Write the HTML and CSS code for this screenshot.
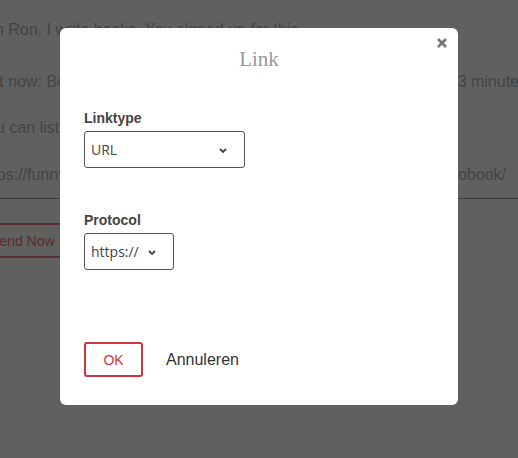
FILE: index.html
```html
<!DOCTYPE html>
<html lang="nl">
<head>
<meta charset="utf-8">
<title>Link</title>
<link rel="stylesheet" href="styles.css">
</head>
<body>
<main class="page">
  <p class="line line-1">I'm Ron. I write books. You signed up for this.</p>
  <p class="line line-2"><span class="line-start">Out now: Book one</span><span class="line-end">33 minutes</span></p>
  <p class="line line-3"><span class="line-start">You can listen to it</span></p>
  <p class="line line-4"><span class="line-start">https://funnybooks</span><span class="line-end">audiobook/</span></p>
  <hr class="rule">
  <button class="send-btn">Send Now</button>
</main>

<div class="overlay">
  <section class="dialog" role="dialog" aria-labelledby="dlg-title">
    <button class="close" aria-label="Sluiten">
      <svg width="10" height="10" viewBox="0 0 10 10"><path d="M1 1 L9 9 M9 1 L1 9" stroke="#777" stroke-width="2.6" stroke-linecap="butt" fill="none"/></svg>
    </button>
    <h2 id="dlg-title" class="title">Link</h2>

    <div class="field field-type">
      <label class="label">Linktype</label>
      <div class="select select-wide"><span>URL</span>
        <svg class="chev" width="8" height="5" viewBox="0 0 8 5"><path d="M1 1 L4 4 L7 1" stroke="#444" stroke-width="1.8" fill="none"/></svg>
      </div>
    </div>

    <div class="field field-protocol">
      <label class="label">Protocol</label>
      <div class="select select-narrow"><span>https://</span>
        <svg class="chev" width="8" height="5" viewBox="0 0 8 5"><path d="M1 1 L4 4 L7 1" stroke="#444" stroke-width="1.8" fill="none"/></svg>
      </div>
    </div>

    <div class="actions">
      <button class="btn-ok">OK</button>
      <button class="btn-cancel">Annuleren</button>
    </div>
  </section>
</div>
</body>
</html>
```

FILE: styles.css
```css
html, body {
  margin: 0;
  padding: 0;
}
body {
  width: 518px;
  height: 458px;
  overflow: hidden;
  background: #606060;
  font-family: "Liberation Sans", Arial, sans-serif;
  position: relative;
}

.page {
  margin-left: -17px;
  width: 542px;
  padding-top: 15px;
  color: #444;
  font-size: 16px;
}
.line {
  margin: 0;
  height: 47px;
  line-height: 30px;
  white-space: nowrap;
  display: flex;
  justify-content: space-between;
}
.line-1 { height: 52px; }
.line-2 { height: 46px; }
.line-4 { height: 38px; }
.line-2 .line-start { margin-left: -5px; }
.line-3 .line-start { margin-left: -5px; }
.line-4 .line-start { margin-left: -4px; }
.line-2 .line-end { margin-right: -2px; }
.line-4 .line-end { margin-right: 19px; }
.rule {
  border: 0;
  border-top: 1px solid #3c3c3c;
  margin: 0;
  width: 560px;
}
.send-btn {
  margin-top: 24px;
  height: 35px;
  padding: 0 30px 0 7px;
  background: transparent;
  border: 2px solid #5a2d31;
  border-left: 0;
  color: #5a2d31;
  font-family: "Liberation Sans", Arial, sans-serif;
  font-size: 14px;
}

.overlay {
  position: fixed;
  inset: 0;
  display: flex;
  justify-content: center;
  align-items: flex-start;
  padding-top: 28px;
}
.dialog {
  position: relative;
  width: 398px;
  height: 377px;
  box-sizing: border-box;
  background: #fff;
  border-radius: 6px;
  padding: 19px 24px 28px;
  display: flex;
  flex-direction: column;
}
.close {
  position: absolute;
  top: 10px;
  right: 11px;
  width: 10px;
  height: 10px;
  padding: 0;
  border: 0;
  background: transparent;
  display: block;
}
.close svg { display: block; }
.title {
  margin: 0;
  text-align: center;
  font-family: "Liberation Serif", "Times New Roman", serif;
  font-weight: normal;
  font-size: 21px;
  line-height: 24px;
  color: #999;
}
.field {
  display: flex;
  flex-direction: column;
  align-items: flex-start;
  gap: 5px;
}
.field-type { margin-top: 39px; }
.field-protocol { margin-top: 44px; }
.label {
  font-size: 14px;
  line-height: 16px;
  font-weight: bold;
  color: #444;
}
.select {
  box-sizing: border-box;
  height: 37px;
  border: 1px solid #555;
  border-radius: 3px;
  display: flex;
  align-items: center;
  justify-content: space-between;
  padding: 0 17px 0 6px;
  font-family: "Open Sans", sans-serif;
  font-size: 14px;
  color: #444;
}
.select-wide { width: 161px; }
.select-narrow { width: 90px; }
.chev { display: block; margin-top: 1px; }

.actions {
  margin-top: auto;
  display: flex;
  align-items: center;
  gap: 23px;
}
.btn-ok {
  box-sizing: border-box;
  width: 59px;
  height: 35px;
  border: 2px solid #d0343f;
  border-radius: 3px;
  background: #fff;
  color: #d0343f;
  font-family: "Liberation Sans", Arial, sans-serif;
  font-size: 14px;
  padding: 0;
}
.btn-cancel {
  border: 0;
  background: transparent;
  padding: 0;
  font-family: "Liberation Sans", Arial, sans-serif;
  font-size: 16px;
  color: #333;
}
```
